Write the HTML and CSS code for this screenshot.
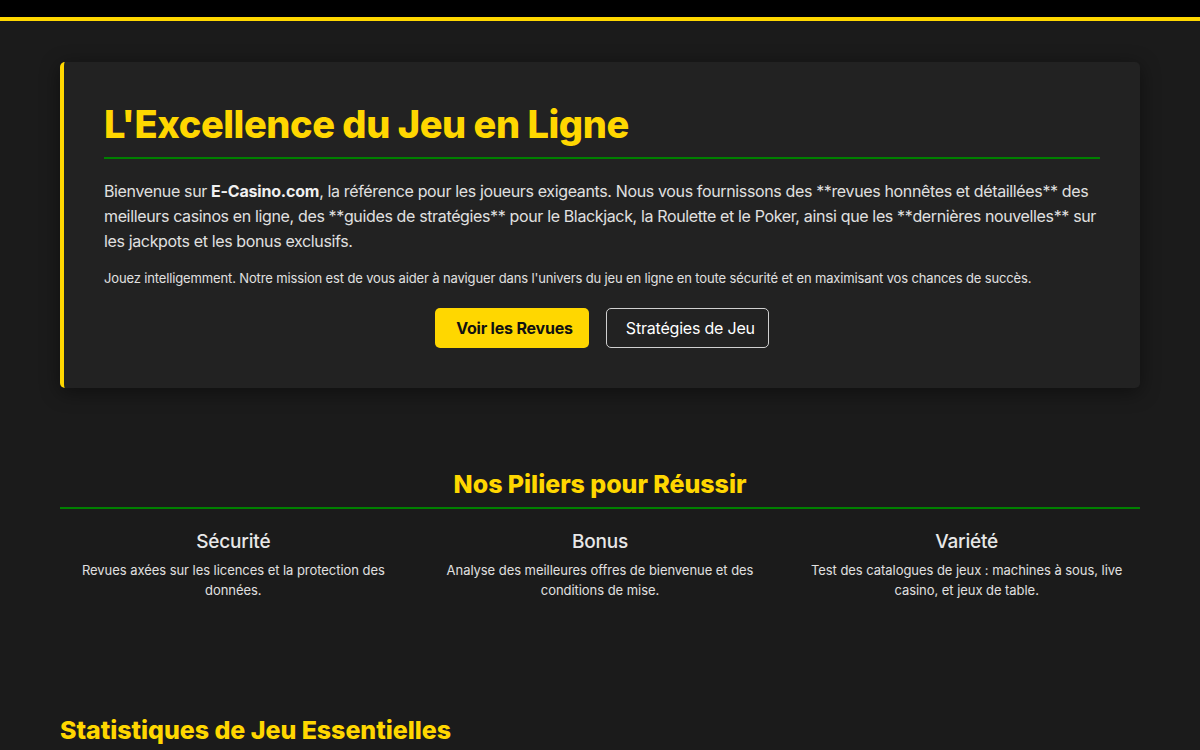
FILE: index.html
```html
<!DOCTYPE html>
<html lang="fr">
<head>
<meta charset="utf-8">
<title>E-Casino.com</title>
<link rel="stylesheet" href="styles.css">
</head>
<body>
<header class="topbar"></header>
<main class="container">
  <section class="hero">
    <h1 class="hero-title">L'Excellence du Jeu en Ligne</h1>
    <p class="hero-lead">Bienvenue sur <strong>E-Casino.com</strong>, la référence pour les joueurs exigeants. Nous vous fournissons des **revues honnêtes et détaillées** des meilleurs casinos en ligne, des **guides de stratégies** pour le Blackjack, la Roulette et le Poker, ainsi que les **dernières nouvelles** sur les jackpots et les bonus exclusifs.</p>
    <p class="hero-note">Jouez intelligemment. Notre mission est de vous aider à naviguer dans l'univers du jeu en ligne en toute sécurité et en maximisant vos chances de succès.</p>
    <div class="hero-actions">
      <a class="btn btn-primary" href="#">Voir les Revues</a>
      <a class="btn btn-outline" href="#">Stratégies de Jeu</a>
    </div>
  </section>

  <section class="pillars">
    <h2 class="section-title center">Nos Piliers pour Réussir</h2>
    <div class="pillar-grid">
      <div class="pillar">
        <h3>Sécurité</h3>
        <p>Revues axées sur les licences et la protection des données.</p>
      </div>
      <div class="pillar">
        <h3>Bonus</h3>
        <p>Analyse des meilleures offres de bienvenue et des conditions de mise.</p>
      </div>
      <div class="pillar">
        <h3>Variété</h3>
        <p>Test des catalogues de jeux : machines à sous, live casino, et jeux de table.</p>
      </div>
    </div>
  </section>

  <section class="stats">
    <h2 class="section-title">Statistiques de Jeu Essentielles</h2>
  </section>
</main>
</body>
</html>
```

FILE: styles.css
```css
* { box-sizing: border-box; }
html, body { margin: 0; padding: 0; }
body {
  background: #1b1b1b;
  color: #e0e0e0;
  font-family: Inter, "Noto Sans", "Liberation Sans", sans-serif;
}
.topbar {
  height: 21px;
  background: #000;
  border-bottom: 4px solid #ffd700;
}
.container {
  max-width: 1080px;
  margin: 0 auto;
  padding-top: 41px;
}
.hero {
  background: #222222;
  border-left: 4px solid #ffd700;
  border-radius: 5px;
  padding: 40px;
  box-shadow: 0 4px 20px rgba(0,0,0,0.45);
}
.hero-title {
  margin: 0;
  color: #ffd700;
  font-size: 38px;
  font-weight: 800;
  letter-spacing: -0.45px;
  line-height: 44px;
  padding-bottom: 11px;
  border-bottom: 2px solid #008000;
}
.hero-lead {
  margin: 20px 0 0;
  font-size: 16px;
  line-height: 25px;
  letter-spacing: -0.36px;
}
.hero-lead strong { font-weight: 700; color: #f0f0f0; letter-spacing: -0.2px; }
.hero-note {
  margin: 14px 0 0;
  font-size: 13px;
  line-height: 20px;
  letter-spacing: -0.14px;
}
.hero-actions {
  display: flex;
  justify-content: center;
  gap: 17px;
  margin-top: 20px;
}
.btn {
  display: inline-flex;
  align-items: center;
  height: 40px;
  border-radius: 5px;
  font-size: 16px;
  letter-spacing: -0.2px;
  text-decoration: none;
}
.btn-primary {
  background: #ffd700;
  color: #111;
  font-weight: 700;
  padding: 0 16px 0 21px;
}
.btn-outline {
  border: 1px solid #d0d0d0;
  color: #fff;
  font-weight: 400;
  padding: 0 13px 0 19px;
}
.pillars { margin-top: 80px; }
.section-title {
  margin: 0;
  color: #ffd700;
  font-size: 25px;
  font-weight: 800;
  letter-spacing: -0.05px;
  line-height: 32px;
}
.section-title.center {
  text-align: center;
  padding-bottom: 7px;
  border-bottom: 2px solid #008000;
}
.pillar-grid {
  display: grid;
  grid-template-columns: repeat(3, 1fr);
  gap: 20px;
  margin-top: 20px;
}
.pillar { text-align: center; padding: 0 15px; }
.pillar h3 {
  margin: 0;
  font-size: 19px;
  font-weight: 500;
  line-height: 26px;
  letter-spacing: -0.2px;
  color: #e8e8e8;
}
.pillar p {
  margin: 5px 0 0;
  font-size: 13px;
  line-height: 20px;
  letter-spacing: -0.05px;
}
.stats { margin-top: 114px; }
```
